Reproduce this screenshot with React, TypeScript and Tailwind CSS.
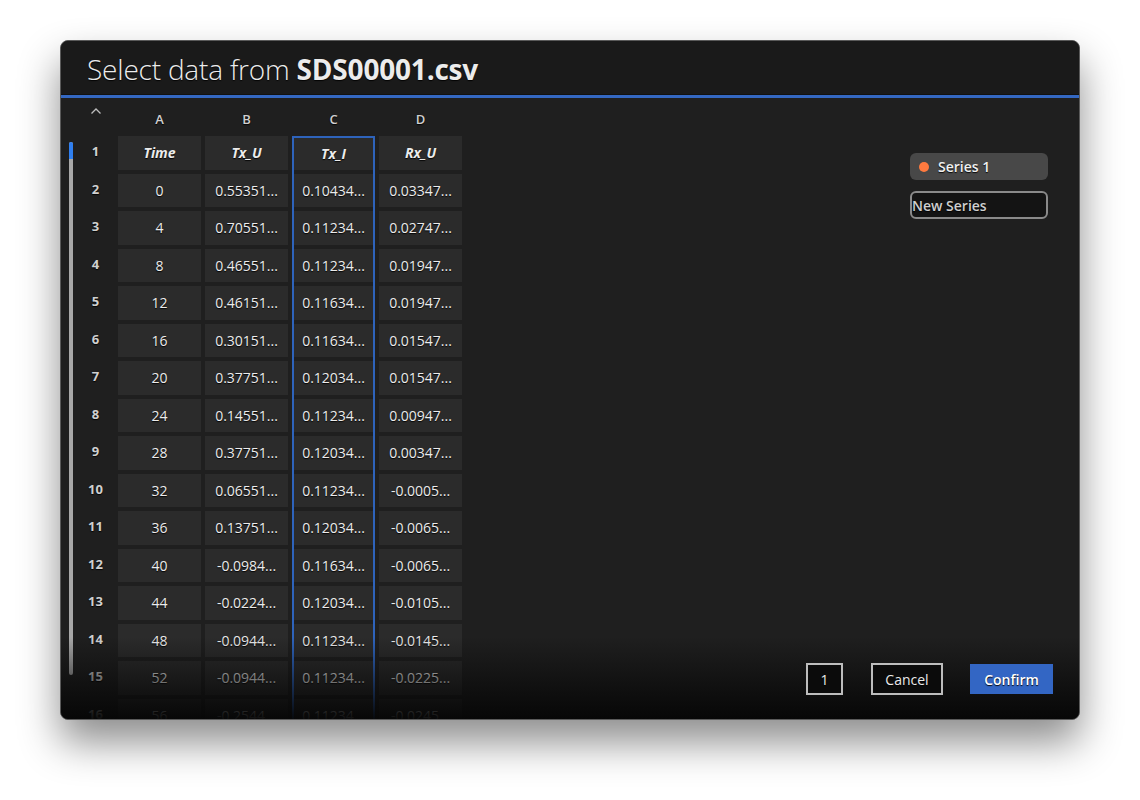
import React from "react";

const times = ["0","4","8","12","16","20","24","28","32","36","40","44","48","52","56"];
const colB = ["0.55351...","0.70551...","0.46551...","0.46151...","0.30151...","0.37751...","0.14551...","0.37751...","0.06551...","0.13751...","-0.0984...","-0.0224...","-0.0944...","-0.0944...","-0.2544..."];
const colC = ["0.10434...","0.11234...","0.11234...","0.11634...","0.11634...","0.12034...","0.11234...","0.12034...","0.11234...","0.12034...","0.11634...","0.12034...","0.11234...","0.11234...","0.11234..."];
const colD = ["0.03347...","0.02747...","0.01947...","0.01947...","0.01547...","0.01547...","0.00947...","0.00347...","-0.0005...","-0.0065...","-0.0065...","-0.0105...","-0.0145...","-0.0225...","-0.0245..."];

const shadowTxt = "[text-shadow:0_1px_1px_rgba(0,0,0,0.9)]";

function Letter({ ch }: { ch: string }) {
  return (
    <div className={`h-[24px] shrink-0 flex items-center justify-center text-[13px] font-semibold text-[#d0d0d0] ${shadowTxt}`}>
      {ch}
    </div>
  );
}

function Cell({ text, header, first }: { text: string; header?: boolean; first?: boolean }) {
  return (
    <div
      className={`${first ? "h-[31.5px]" : "h-[33.5px]"} shrink-0 w-full bg-[#2b2b2b] flex items-center justify-center text-[14px] text-[#ececec] ${shadowTxt} whitespace-nowrap ${
        header ? "italic font-bold" : "font-medium"
      }`}
    >
      {text}
    </div>
  );
}

function Column({ letter, header, data }: { letter: string; header: string; data: string[] }) {
  return (
    <div className="w-[83px] shrink-0 flex flex-col gap-[4px]">
      <Letter ch={letter} />
      <Cell text={header} header />
      {data.map((d, i) => (
        <Cell key={i} text={d} />
      ))}
    </div>
  );
}

export default function App() {
  return (
    <div
      className="w-[1140px] h-[800px] bg-white pt-[40px] pl-[60px]"
      style={{ fontFamily: '"Open Sans", "Noto Sans", sans-serif' }}
    >
      <div className="relative w-[1020px] h-[680px] rounded-[8px] border border-[#5a5a5a] bg-[#1f1f1f] overflow-hidden shadow-[0_22px_40px_rgba(0,0,0,0.45)] flex flex-col">
        {/* Header */}
        <div className="h-[54px] bg-[#1a1a1a] flex items-center pl-[26px] border-b border-[#111] shrink-0">
          <div className={`text-[28px] text-[#ececec] ${shadowTxt} leading-none tracking-[-0.2px] mt-[2px]`}>
            <span className="font-light">Select data from </span>
            <span className="font-bold">SDS00001.csv</span>
          </div>
        </div>
        <div className="h-[3px] bg-[#3468c2] shrink-0" />

        {/* Body */}
        <div className="flex flex-1 min-h-0 items-start">
          {/* scrollbar */}
          <div className="ml-[8px] mt-[44px] w-[4px] h-[533px] rounded-full bg-[#a8a8a8] flex flex-col overflow-hidden shrink-0">
            <div className="h-[17px] bg-[#2f7ff0] shrink-0" />
          </div>

          {/* row numbers */}
          <div className="pt-[10px] w-[45px] flex flex-col gap-[4px] shrink-0">
            <div className="h-[24px] shrink-0 flex items-start justify-center -mt-[1px]">
              <svg width="12" height="8" viewBox="0 0 12 8" fill="none">
                <path d="M1.5 6.5 L6 2 L10.5 6.5" stroke="#bdbdbd" strokeWidth="1.3" />
              </svg>
            </div>
            {Array.from({ length: 16 }, (_, i) => (
              <div
                key={i}
                className={`h-[33.5px] shrink-0 flex items-center justify-center text-[13px] font-bold text-[#d0d0d0] ${shadowTxt}`}
              >
                {i + 1}
              </div>
            ))}
          </div>

          {/* table */}
          <div className="pt-[10px] flex gap-[4px] shrink-0">
            <Column letter="A" header="Time" data={times} />
            <Column letter="B" header="Tx_U" data={colB} />
            <div className="w-[83px] shrink-0 flex flex-col gap-[4px]">
              <Letter ch="C" />
              <div className="border-2 border-b-0 border-[#2e63bb] flex flex-col gap-[4px] shrink-0">
                <Cell text="Tx_I" header first />
                {colC.map((d, i) => (
                  <Cell key={i} text={d} />
                ))}
              </div>
            </div>
            <Column letter="D" header="Rx_U" data={colD} />
          </div>

          <div className="flex-1" />

          {/* right panel */}
          <div className="w-[138px] mr-[31px] pt-[55px] flex flex-col gap-[11px] shrink-0">
            <div className="h-[27px] rounded-[6px] bg-[#484848] flex items-center pl-[9px] gap-[9px]">
              <div className="w-[10px] h-[10px] rounded-full bg-[#ff7a3f]" />
              <span className={`text-[14px] font-semibold text-[#f0f0f0] ${shadowTxt}`}>Series 1</span>
            </div>
            <div className="h-[28px] rounded-[6px] border-2 border-[#8a8a8a] bg-[#141414] flex items-center">
              <span className={`text-[14px] font-semibold text-[#cfcfcf] ${shadowTxt}`}>New Series</span>
            </div>
          </div>
        </div>

        {/* bottom fade */}
        <div className="absolute left-0 right-0 bottom-0 h-[82px] bg-gradient-to-b from-[rgba(6,6,6,0)] to-[rgba(6,6,6,0.96)] pointer-events-none" />

        {/* buttons */}
        <div className="absolute right-[26px] bottom-[24px] flex items-center">
          <div className={`w-[37px] h-[32px] border-2 border-[#bdbdbd] bg-[#0b0b0b] flex items-center justify-center text-[14px] text-[#eaeaea] ${shadowTxt}`}>
            1
          </div>
          <div className={`ml-[28px] w-[72px] h-[32px] border-2 border-[#bdbdbd] bg-[#0b0b0b] flex items-center justify-center text-[14px] text-[#eaeaea] ${shadowTxt}`}>
            Cancel
          </div>
          <div className={`ml-[27px] w-[83px] h-[30px] bg-[#3366c4] flex items-center justify-center text-[14px] font-semibold text-white ${shadowTxt}`}>
            Confirm
          </div>
        </div>
      </div>
    </div>
  );
}
